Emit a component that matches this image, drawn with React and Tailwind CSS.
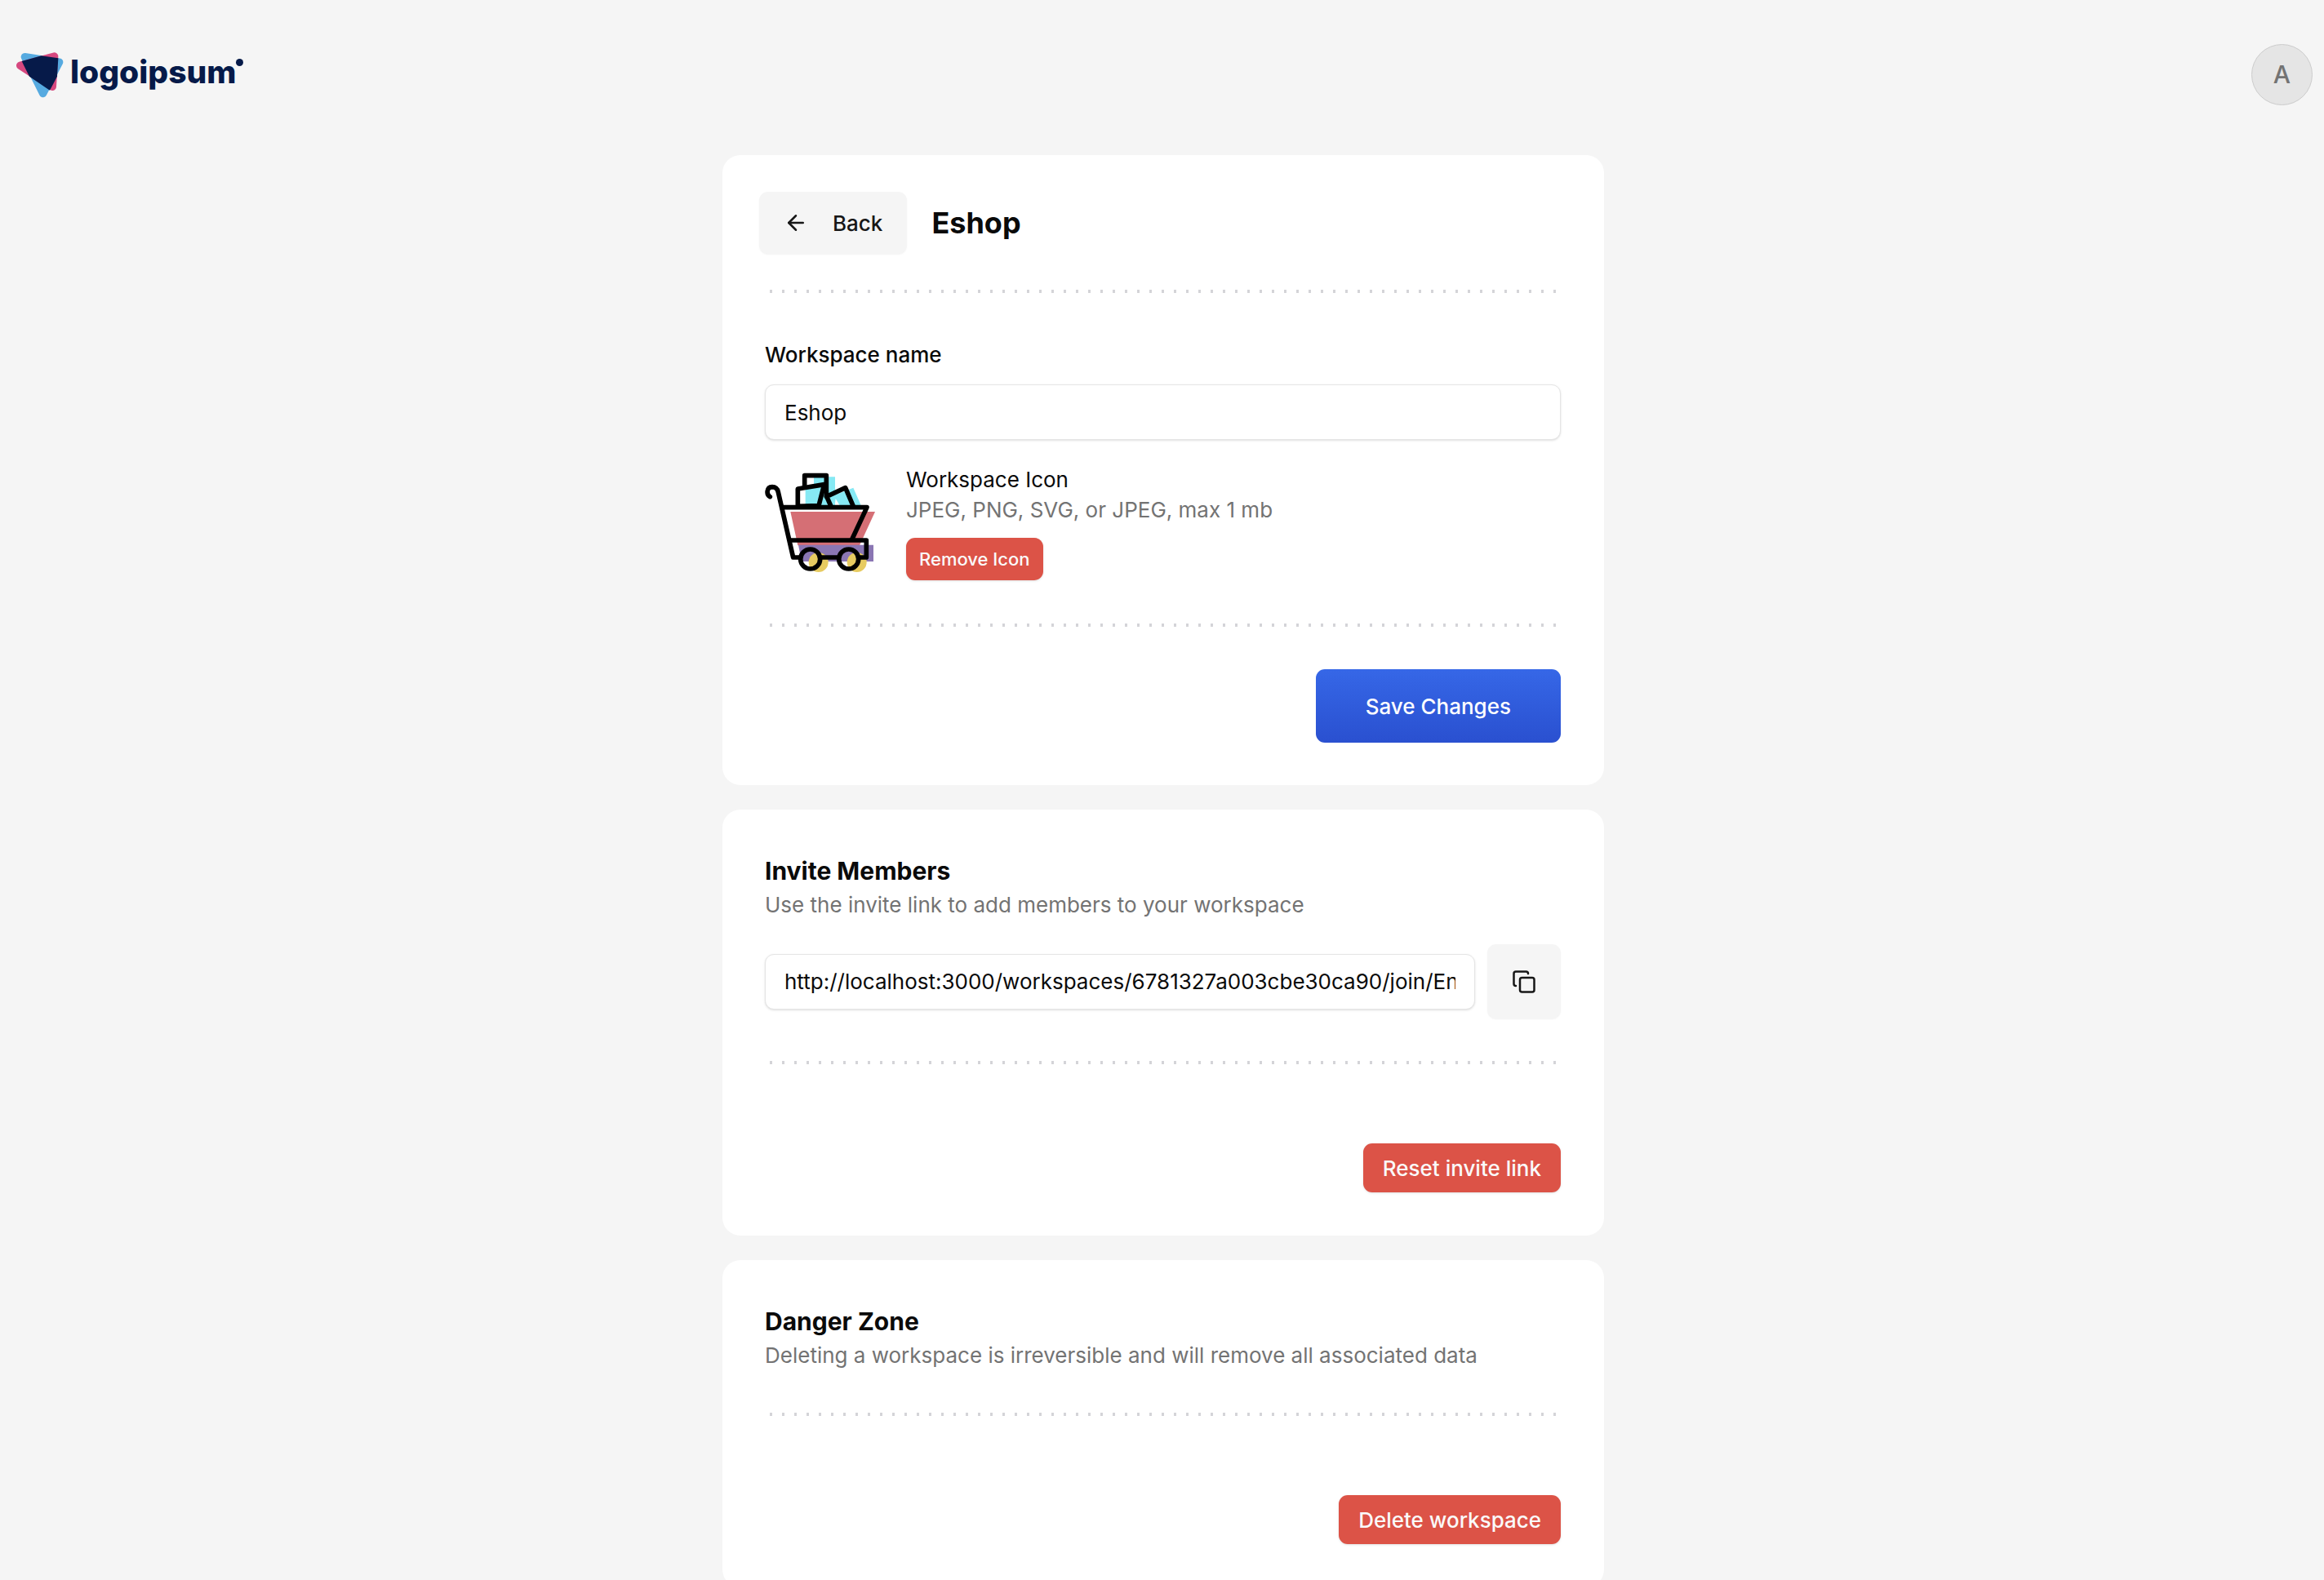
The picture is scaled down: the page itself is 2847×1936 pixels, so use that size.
import { useState } from "react";
import { ArrowLeft, Copy } from "lucide-react";

function Logo() {
  return (
    <a href="#" aria-label="logoipsum" className="flex items-center gap-2 text-[#061a49]">
      <svg viewBox="60 69 174 168" className="h-14 w-[58px]" aria-hidden="true">
        <path d="M91 86 218 105 158 221Z" fill="#56aae0" stroke="#56aae0" strokeWidth="28" strokeLinejoin="round" />
        <path d="M74 118 200 84 193 196Z" fill="#d6487f" stroke="#d6487f" strokeWidth="28" strokeLinejoin="round" />
        <path d="M152 82 214 91 210 158 183 209 108 158 80 102Z" fill="#061a49" />
      </svg>
      <span className="flex items-start pb-2">
        <span className="text-[39px] leading-[56px] font-extrabold">logoipsum</span>
        <span className="mt-3 size-[9px] rounded-full bg-[#061a49]" />
      </span>
    </a>
  );
}

function CartPicture() {
  return (
    <svg viewBox="51 36 405 405" className="size-[135px] shrink-0" role="img" aria-label="Shopping cart">
      <path d="M231 70H309V175H200V110L231 100Z" fill="#86e9f4" />
      <path d="M285 145 376 110 405 176H327L311 150 308 176H262Z" fill="#86e9f4" />
      <path d="M145 198H456L399 322H172Z" fill="#d56f75" />
      <path d="M174 320H450V381H186Z" fill="#8a76b3" />
      <circle cx="248" cy="384" r="36" fill="#e7cb61" />
      <circle cx="389" cy="384" r="36" fill="#e7cb61" />
      <g fill="none" stroke="#000" strokeWidth="17" strokeLinecap="round" strokeLinejoin="round">
        <path d="M70 143C56 136 56 108 78 107 91 107 97 113 100 126L155 366H182" />
        <path d="M115 182H426L371 300" />
        <path d="M145 303H424V366H402" />
        <path d="M260 366H318" />
        <path d="M197 108V65H277V142" />
        <path d="M172 178V114L269 98 249 176Z" />
        <path d="M294 178 278 142 347 110 376 178" />
        <circle cx="218" cy="372" r="36" />
        <circle cx="359" cy="372" r="36" />
      </g>
    </svg>
  );
}

function DottedSeparator() {
  return (
    <hr className="h-1 border-0 bg-[linear-gradient(90deg,transparent_6px,#d4d4d8_6px,#d4d4d8_9px,transparent_9px)] bg-[length:15px_4px]" />
  );
}

function Card({ children }) {
  return <section className="rounded-[22px] bg-white">{children}</section>;
}

const inputStyle =
  "h-[68px] w-full min-w-0 rounded-[11px] border border-[#e5e5e5] bg-white px-[23px] text-[26px] text-[#0a0a0a] shadow-sm outline-none";

const destructiveStyle = "rounded-[11px] bg-[#dc5347] font-medium text-[#fafafa] shadow-sm";

function SectionHeading({ title, children }) {
  return (
    <>
      <h2 className="text-[30px] leading-[45px] font-bold">{title}</h2>
      <p className="text-[26px] leading-[37px] text-[#737373]">{children}</p>
    </>
  );
}

function SettingsCard() {
  const [name, setName] = useState("Eshop");
  return (
    <Card>
      <form onSubmit={(e) => e.preventDefault()}>
        <div className="flex items-center gap-[30px] px-[45px] pt-[45px] pb-11">
          <button
            type="button"
            className="flex h-[76px] items-center gap-[30px] rounded-[11px] bg-[#f5f5f5] px-[30px] text-[26px] font-medium text-[#171717] shadow-xs"
          >
            <ArrowLeft className="size-[30px]" />
            Back
          </button>
          <h1 className="text-[36px] leading-[52px] font-bold">{name}</h1>
        </div>
        <div className="pr-[53px] pl-[52px] pb-[52px]">
          <DottedSeparator />
          <div className="flex flex-col pt-[57px]">
            <label htmlFor="workspace-name" className="text-[26px] leading-[37px] font-medium">
              Workspace name
            </label>
            <input
              id="workspace-name"
              value={name}
              onChange={(e) => setName(e.target.value)}
              className={`${inputStyle} mt-[18px]`}
            />
          </div>
          <div className="mt-[30px] mb-[53px] flex items-center gap-[38px]">
            <CartPicture />
            <div>
              <p className="text-[26px] leading-[37px]">Workspace Icon</p>
              <p className="text-[26px] leading-[37px] text-[#737373]">JPEG, PNG, SVG, or JPEG, max 1 mb</p>
              <button type="button" className={`${destructiveStyle} mt-4 h-[52px] px-4 text-[22px]`}>
                Remove Icon
              </button>
            </div>
          </div>
          <DottedSeparator />
          <div className="mt-[52px] flex justify-end">
            <button
              type="submit"
              className="h-[90px] rounded-[11px] bg-linear-to-b from-[#3667e7] to-[#2a50d0] px-[61px] text-[26px] font-medium text-white"
            >
              Save Changes
            </button>
          </div>
        </div>
      </form>
    </Card>
  );
}

function InviteCard() {
  return (
    <Card>
      <div className="pt-[53px] pr-[53px] pb-[53px] pl-[52px]">
        <SectionHeading title="Invite Members">Use the invite link to add members to your workspace</SectionHeading>
        <div className="mt-[30px] mb-[52px] flex items-center gap-[15px]">
          <input
            readOnly
            aria-label="Invite link"
            value="http://localhost:3000/workspaces/6781327a003cbe30ca90/join/EnR4xq"
            className={inputStyle}
          />
          <button
            type="button"
            aria-label="Copy invite link"
            className="flex h-[91px] w-[90px] shrink-0 items-center justify-center rounded-[11px] bg-[#f5f5f5] text-[#171717] shadow-xs"
          >
            <Copy className="size-[30px]" />
          </button>
        </div>
        <DottedSeparator />
        <div className="mt-[97px] flex justify-end">
          <button type="button" className={`${destructiveStyle} h-[60px] px-6 text-[26px]`}>
            Reset invite link
          </button>
        </div>
      </div>
    </Card>
  );
}

function DangerCard() {
  return (
    <Card>
      <div className="pt-[53px] pr-[53px] pb-[53px] pl-[52px]">
        <SectionHeading title="Danger Zone">
          Deleting a workspace is irreversible and will remove all associated data
        </SectionHeading>
        <div className="mt-[52px]">
          <DottedSeparator />
        </div>
        <div className="mt-[97px] flex justify-end">
          <button type="button" className={`${destructiveStyle} h-[60px] px-6 text-[26px]`}>
            Delete workspace
          </button>
        </div>
      </div>
    </Card>
  );
}

export default function App() {
  return (
    <div className="h-screen overflow-hidden bg-[#f5f5f5] font-['Inter',sans-serif] text-[#0a0a0a]">
      <header className="flex items-center justify-between pt-[54px] pr-[14px] pl-5">
        <Logo />
        <button
          type="button"
          className="flex size-[75px] items-center justify-center rounded-full border border-[#cccccc] bg-[#e5e5e5] text-[30px] font-medium text-[#737373]"
        >
          A
        </button>
      </header>
      <main className="flex justify-center pt-[61px] pr-[15px] pl-[18px]">
        <div className="flex w-full max-w-[1080px] flex-col gap-[30px]">
          <SettingsCard />
          <InviteCard />
          <DangerCard />
        </div>
      </main>
    </div>
  );
}
